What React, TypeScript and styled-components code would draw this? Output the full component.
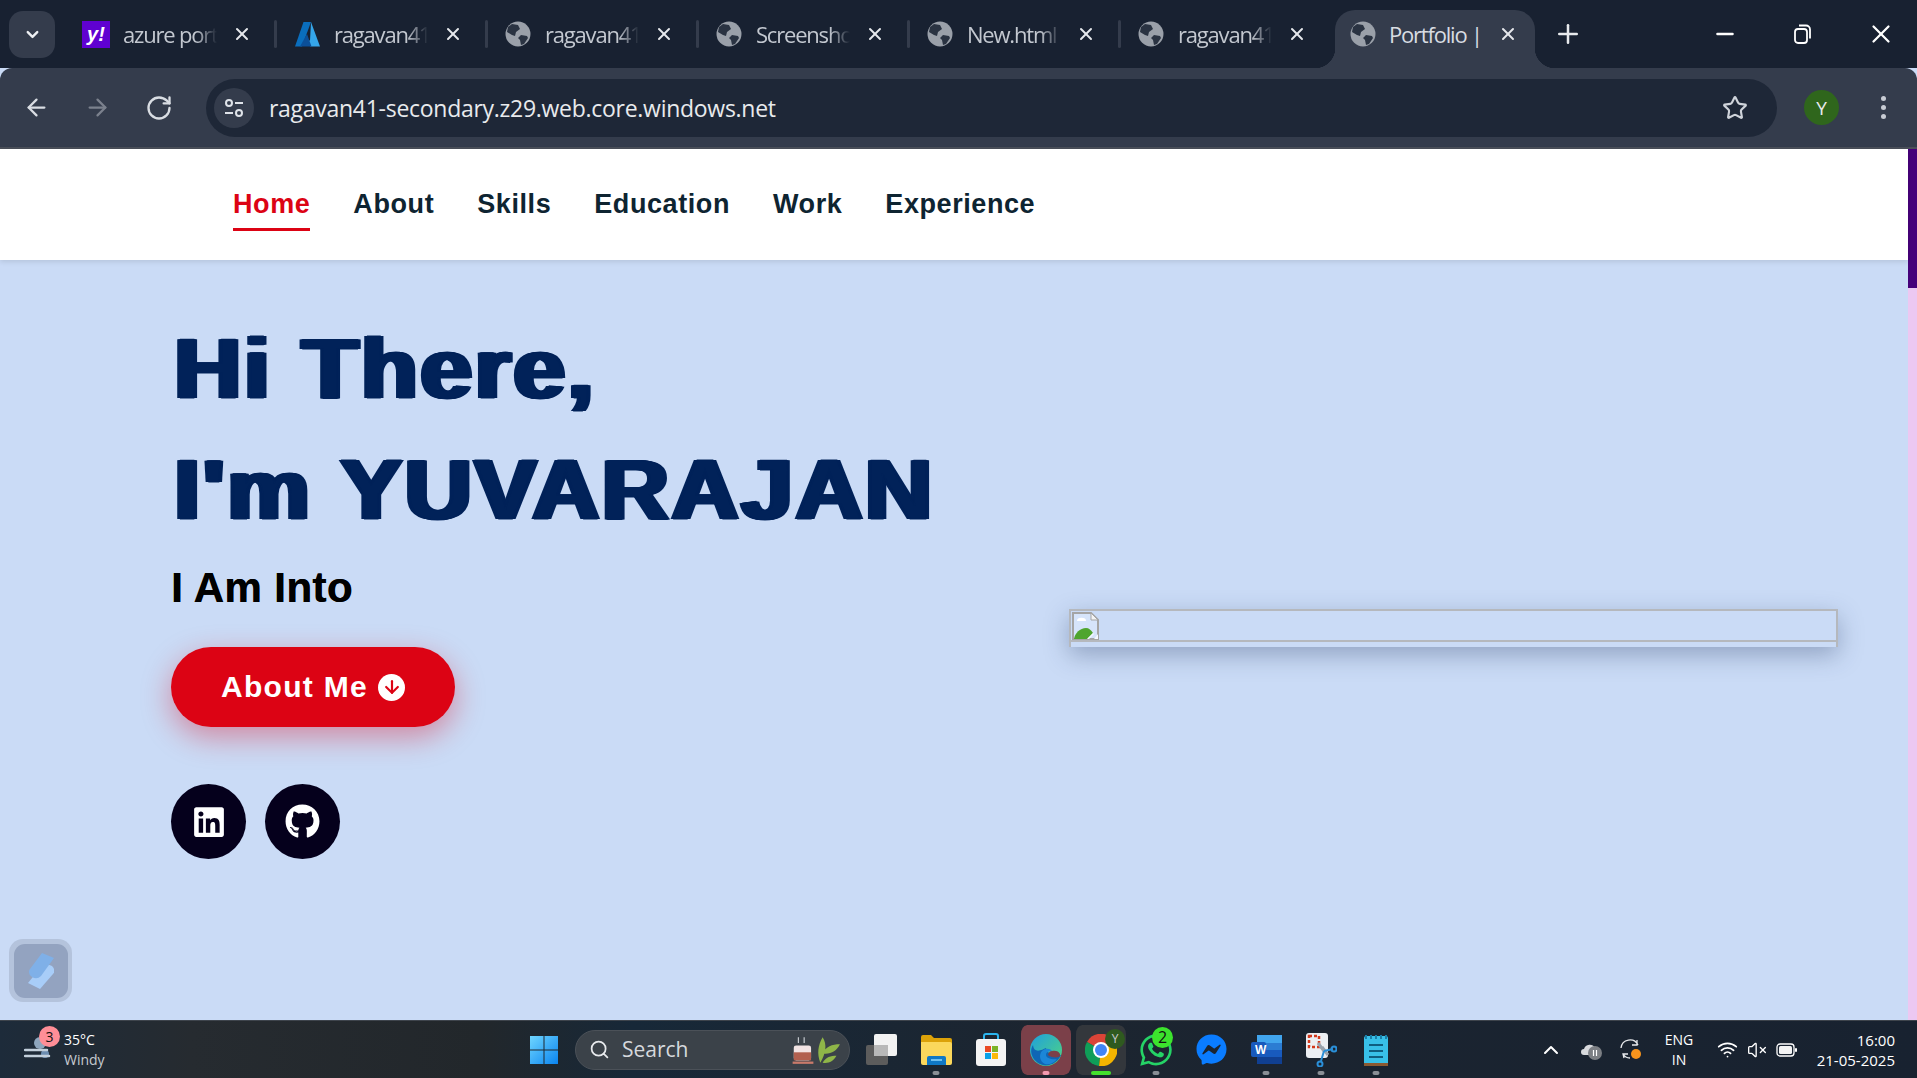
import React from "react";
import styled, { createGlobalStyle } from "styled-components";
import {
  ArrowLeft,
  ArrowRight,
  ArrowDown,
  ChevronDown,
  ChevronUp,
  Minus,
  Plus,
  RotateCw,
  Search,
  Star,
  VolumeX,
  Wifi,
  X,
} from "lucide-react";
import { FaFacebookMessenger, FaGithub, FaLinkedin, FaWhatsapp } from "react-icons/fa";

const TABS = [
  { icon: "yahoo", title: "azure portal" },
  { icon: "azure", title: "ragavan41-secondary" },
  { icon: "globe", title: "ragavan41-secondary" },
  { icon: "globe", title: "Screenshot" },
  { icon: "globe", title: "New.html" },
  { icon: "globe", title: "ragavan41-secondary" },
];

const NAV_ITEMS = ["Home", "About", "Skills", "Education", "Work", "Experience"];

const GlobeIcon = () => (
  <svg width="26" height="26" viewBox="0 0 26 26">
    <circle cx="13" cy="13" r="12.5" fill="#9aa0a9" />
    <path d="M7 3l6 1 2 4-4 3-1 4-3-1-5-3 1-5zM16 14l6 1 1 2-4 6-3 1-1-5-2-2z" fill="#2a3342" />
  </svg>
);

const AzureIcon = () => (
  <svg width="27" height="27" viewBox="0 0 27 27">
    <path d="M9.5 1H17L8 25.5H1z" fill="#0a6ebd" />
    <path d="M17 1l9 24.5h-9.5L11 19.5h5z" fill="#35a6ea" />
    <path d="M13 13l4.5 12.5H6z" fill="#0b4f99" />
  </svg>
);

const SiteInfoIcon = () => (
  <svg width="22" height="22" viewBox="0 0 22 22" fill="none" stroke="#dfe3e9" strokeWidth="2">
    <circle cx="6" cy="6" r="3" />
    <path d="M12 6h8M2 16h8" />
    <circle cx="16" cy="16" r="3" />
  </svg>
);

const RestoreIcon = () => (
  <svg width="18" height="20" viewBox="0 0 18 20" fill="none" stroke="#fff" strokeWidth="1.8">
    <rect x="1" y="5" width="12" height="14" rx="3" />
    <path d="M5 1.5h7a4 4 0 0 1 4 4v9" />
  </svg>
);

const BrokenImageIcon = () => (
  <svg width="27" height="28" viewBox="0 0 27 28">
    <path d="M1 1h18l7 7v19H1z" fill="#d6e4fa" stroke="#a5a5a5" strokeWidth="2" />
    <path d="M19 1v7h7z" fill="#f4f4f4" stroke="#a5a5a5" strokeWidth="1" />
    <path d="M5 9a3.500 2.500 0 0 1 9 0z" fill="#fff" />
    <path d="M2 27c1-6 6-11 12-11 3 0 5 2 7 5l-6 6z" fill="#4fa52e" />
    <path d="M15 27l6-6 1 1-5 5z" fill="#f4f8ff" />
    <path d="M22 27l4-5v5z" fill="#f4f8ff" />
  </svg>
);

const ShortcutIcon = () => (
  <svg width="26" height="36" viewBox="0 0 26 36">
    <path d="M24 13q4 4 1 8L12 36 0 30l13-16q5-4 11-1z" fill="#a8cdf8" />
    <path d="M14 0l12 5-13 18q-4 4-9 1-5-4-2-8z" fill="#7fb0e8" />
  </svg>
);

const WindIcon = () => (
  <svg width="32" height="32" viewBox="0 0 32 32" fill="none">
    <circle cx="16" cy="9" r="6" fill="#8ea6bd" />
    <circle cx="21" cy="20" r="4" fill="#6c8db0" />
    <path d="M1 16h22M1 22h24" stroke="#c3d0dc" strokeWidth="2.5" strokeLinecap="round" />
  </svg>
);

const WindowsIcon = () => (
  <svg width="30" height="30" viewBox="0 0 30 30">
    <defs>
      <linearGradient id="win" x1="0" y1="0" x2="1" y2="1">
        <stop offset="0" stopColor="#6fd6ff" />
        <stop offset="1" stopColor="#0a84f0" />
      </linearGradient>
    </defs>
    <path d="M1 1h13.5v13.5H1zM15.500 1H29v13.500H15.500zM1 15.500h13.500V29H1zM15.500 15.500H29V29H15.500z" fill="url(#win)" />
  </svg>
);

const TeaPlantIcon = () => (
  <svg width="52" height="30" viewBox="0 0 44 26">
    <rect x="1" y="9" width="15" height="13" rx="2" fill="#f2e4e4" />
    <rect x="1" y="15" width="15" height="7" fill="#b2604f" />
    <rect x="0" y="23" width="18" height="2" fill="#c97a6a" />
    <path d="M5 7V2M10 7V2" stroke="#c9cdd2" strokeWidth="1" />
    <path d="M24 24c-3-8-2-15 2-22 4 6 3 14-2 22zM26 16c3-6 8-8 15-8-3 6-8 9-15 8zM26 24c3-5 7-6 12-6-3 5-7 7-12 6z" fill="#8fb548" />
  </svg>
);

const TaskViewIcon = () => (
  <svg width="31" height="31" viewBox="0 0 31 31">
    <rect x="0" y="11" width="22" height="20" rx="2" fill="#5c5c5c" />
    <rect x="8" y="0" width="23" height="22" rx="2" fill="#f2f2f2" />
    <rect x="8" y="11" width="14" height="11" fill="#b8b8b8" />
  </svg>
);

const FolderIcon = () => (
  <svg width="31" height="31" viewBox="0 0 31 31">
    <path d="M0 3a2 2 0 0 1 2-2h8l3 3h16a2 2 0 0 1 2 2v4H0z" fill="#dca209" />
    <path d="M0 8h29a2 2 0 0 1 2 2v19a2 2 0 0 1-2 2H2a2 2 0 0 1-2-2z" fill="#fbd85c" />
    <path d="M6 31v-7a2 2 0 0 1 2-2h15a2 2 0 0 1 2 2v7z" fill="#0f78c5" />
    <rect x="10" y="25" width="11" height="2" fill="#6ec0f0" />
  </svg>
);

const StoreIcon = () => (
  <svg width="30" height="33" viewBox="0 0 30 33">
    <path d="M8 8V3a2 2 0 0 1 2-2h10a2 2 0 0 1 2 2v5" fill="none" stroke="#2cb5ee" strokeWidth="2" />
    <rect x="0" y="6" width="30" height="27" rx="3" fill="#f4f4f4" />
    <rect x="9" y="13" width="6" height="6" fill="#ea4a24" />
    <rect x="16" y="13" width="6" height="6" fill="#7cb327" />
    <rect x="9" y="20" width="6" height="6" fill="#0aa1e8" />
    <rect x="16" y="20" width="6" height="6" fill="#fbb90a" />
  </svg>
);

const EdgeIcon = () => (
  <svg width="32" height="32" viewBox="0 0 32 32">
    <defs>
      <linearGradient id="edge" x1="0" y1="0" x2="1" y2="1">
        <stop offset="0" stopColor="#1e9fe0" />
        <stop offset="1" stopColor="#52d67c" />
      </linearGradient>
    </defs>
    <circle cx="16" cy="16" r="16" fill="url(#edge)" />
    <path d="M31 21c-3 8-14 14-23 8C2 25-1 17 3 11c1 9 9 5 13 3 1 5 5 7 15 7z" fill="#0f66b5" />
    <path d="M15 30c-6-3-6-10-3-13 3-3 8-3 10 0-3 0-6 1-6 4 0 3 6 5 11 4-3 4-7 6-12 5z" fill="#1b86d8" />
    <path d="M22 17c3-1 7 0 8 3 0 1 0 2-1 3-4 1-9 0-11-2 0-2 2-4 4-4z" fill="#7b4049" />
  </svg>
);

const ChromeIcon = () => (
  <svg width="32" height="32" viewBox="0 0 32 32">
    <path d="M16 16L2 8A16 16 0 0 1 30 8z" fill="#db4437" />
    <path d="M16 16L2 8a16 16 0 0 0 12 24z" fill="#0f9d58" />
    <path d="M16 16L14 32A16 16 0 0 0 30 8z" fill="#f4b400" />
    <circle cx="16" cy="16" r="8" fill="#fff" />
    <circle cx="16" cy="16" r="6" fill="#4285f4" />
  </svg>
);

const WordIcon = () => (
  <svg width="31" height="31" viewBox="0 0 31 31">
    <rect x="6" y="1" width="25" height="29" rx="2" fill="#2b7cd3" />
    <rect x="6" y="1" width="25" height="8" fill="#41a5ee" />
    <rect x="6" y="16" width="25" height="7" fill="#185abd" />
    <rect x="6" y="23" width="25" height="7" fill="#103f91" />
    <rect x="0" y="8" width="15" height="15" rx="2" fill="#185abd" />
  </svg>
);

const SnipIcon = () => (
  <svg width="31" height="34" viewBox="0 0 31 34">
    <rect x="0" y="0" width="22" height="25" rx="3" fill="#eceff3" />
    <rect x="3" y="3" width="10" height="11" fill="none" stroke="#d2381c" strokeWidth="2.500" strokeDasharray="3 2" />
    <path d="M12 10l6 8M22 22l-6-8" stroke="#9aa3ad" strokeWidth="3" />
    <path d="M18 18l9-2M18 18l-3 10" stroke="#2a8fd8" strokeWidth="2" />
    <circle cx="28" cy="16" r="2.500" fill="none" stroke="#2a8fd8" strokeWidth="2" />
    <circle cx="14" cy="31" r="2.500" fill="none" stroke="#2a8fd8" strokeWidth="2" />
  </svg>
);

const NotepadIcon = () => (
  <svg width="24" height="32" viewBox="0 0 24 32">
    <rect x="0" y="2" width="24" height="30" rx="2" fill="#38c0e8" />
    <rect x="0" y="29" width="24" height="3" fill="#8c5a32" />
    <path d="M2 1v4M7 1v4M12 1v4M17 1v4M22 1v4" stroke="#1a7fa8" strokeWidth="2" />
    <path d="M5 11h14M5 17h14M5 23h14" stroke="#0f5e80" strokeWidth="2" />
  </svg>
);

const CloudIcon = () => (
  <svg width="21" height="20" viewBox="0 0 21 20">
    <path d="M3 15a3 3 0 0 1 0-6 6 6 0 0 1 11-1 3 3 0 0 1 4 3v4z" fill="#d8dadd" />
    <circle cx="14" cy="13" r="7" fill="#7c7f84" />
    <path d="M12.500 10v6M15.500 10v6" stroke="#fff" strokeWidth="1.200" />
  </svg>
);

const SyncIcon = () => (
  <svg width="22" height="22" viewBox="0 0 22 22" fill="none">
    <path d="M1 9a9 9 0 0 1 17-3M17 1v5h-5M4 19l-1-4h5M3 15a8 8 0 0 0 7 4" stroke="#e8eaed" strokeWidth="1.300" />
    <circle cx="16" cy="15" r="5" fill="#f7941d" />
  </svg>
);

const BatteryIcon = () => (
  <svg width="21" height="14" viewBox="0 0 21 14">
    <rect x="1" y="1" width="17" height="12" rx="3" fill="none" stroke="#fff" strokeWidth="1.300" />
    <rect x="3" y="3" width="13" height="8" rx="1.500" fill="#f4f4f4" />
    <rect x="19" y="5" width="2" height="4" rx="1" fill="#fff" />
  </svg>
);

const tabIcon = (name: string) => {
  if (name === "yahoo") return <YahooIcon>y!</YahooIcon>;
  if (name === "azure") return <AzureIcon />;
  return <GlobeIcon />;
};

const App = () => {
  return (
    <Wrapper>
      <GlobalStyle />
      <TabStrip>
        <TabSearch>
          <ChevronDown size={19} strokeWidth={3} />
        </TabSearch>
        {TABS.map((tab, i) => (
          <Tab key={i} $separator={i < TABS.length - 1}>
            <TabIconSlot>{tabIcon(tab.icon)}</TabIconSlot>
            <TabTitle>{tab.title}</TabTitle>
            <TabClose>
              <X size={20} strokeWidth={2.4} />
            </TabClose>
          </Tab>
        ))}
        <ActiveTab>
          <GlobeIcon />
          <ActiveTitle>Portfolio | Yuvarajan</ActiveTitle>
          <X size={20} strokeWidth={2.4} color="#e6e8ec" />
        </ActiveTab>
        <NewTab>
          <Plus size={30} strokeWidth={2} />
        </NewTab>
        <WindowControls>
          <WindowButton>
            <Minus size={26} strokeWidth={2.2} />
          </WindowButton>
          <WindowButton>
            <RestoreIcon />
          </WindowButton>
          <WindowButton>
            <X size={30} strokeWidth={1.8} />
          </WindowButton>
        </WindowControls>
      </TabStrip>

      <Toolbar>
        <ToolButton>
          <ArrowLeft size={27} strokeWidth={2} />
        </ToolButton>
        <ToolButton $disabled>
          <ArrowRight size={27} strokeWidth={2} />
        </ToolButton>
        <ToolButton>
          <RotateCw size={28} strokeWidth={2} />
        </ToolButton>
        <Omnibox>
          <SiteInfo>
            <SiteInfoIcon />
          </SiteInfo>
          <Url>ragavan41-secondary.z29.web.core.windows.net</Url>
          <Star size={26} strokeWidth={2} color="#cfd3da" />
        </Omnibox>
        <Avatar>Y</Avatar>
        <MenuDots>
          <i />
          <i />
          <i />
        </MenuDots>
      </Toolbar>

      <PageArea>
        <Page>
          <Navbar>
            {NAV_ITEMS.map((item, i) => (
              <NavLink key={item} $active={i === 0}>
                {item}
              </NavLink>
            ))}
          </Navbar>
          <Hero>
            <HeroText>
              <Heading>Hi There,</Heading>
              <Heading>I'm YUVARAJAN</Heading>
              <SubHeading>I Am Into</SubHeading>
              <AboutButton>
                About Me
                <AboutArrow>
                  <ArrowDown size={20} strokeWidth={2.6} />
                </AboutArrow>
              </AboutButton>
              <Socials>
                <SocialLink>
                  <FaLinkedin size={34} />
                </SocialLink>
                <SocialLink>
                  <FaGithub size={35} />
                </SocialLink>
              </Socials>
            </HeroText>
            <HeroImage>
              <ImageFrame>
                <BrokenImageIcon />
              </ImageFrame>
            </HeroImage>
          </Hero>
          <FloatingShortcut>
            <ShortcutInner>
              <ShortcutIcon />
            </ShortcutInner>
          </FloatingShortcut>
        </Page>
        <Scrollbar>
          <ScrollThumb />
        </Scrollbar>
      </PageArea>

      <Taskbar>
        <Weather>
          <WeatherIcon>
            <WindIcon />
            <WeatherBadge>3</WeatherBadge>
          </WeatherIcon>
          <WeatherText>
            <span>35°C</span>
            <WeatherSub>Windy</WeatherSub>
          </WeatherText>
        </Weather>
        <TaskCenter>
          <TaskSlot>
            <WindowsIcon />
          </TaskSlot>
          <SearchPill>
            <Search size={21} strokeWidth={2} />
            <SearchLabel>Search</SearchLabel>
            <TeaPlantIcon />
          </SearchPill>
          <TaskSlot $ml={3}>
            <TaskViewIcon />
          </TaskSlot>
          <TaskSlot $dot="#8a8f96">
            <FolderIcon />
          </TaskSlot>
          <TaskSlot>
            <StoreIcon />
          </TaskSlot>
          <TaskSlot $bg="#7b4049" $dot="#f49ab0">
            <EdgeIcon />
          </TaskSlot>
          <TaskSlot $bg="#33373c" $dot="#45e02e" $wideDot>
            <ChromeIcon />
            <ChromeProfile>Y</ChromeProfile>
          </TaskSlot>
          <TaskSlot $dot="#8a8f96">
            <FaWhatsapp size={36} color="#25d366" />
            <WhatsappBadge>2</WhatsappBadge>
          </TaskSlot>
          <TaskSlot>
            <FaFacebookMessenger size={31} color="#0a7cff" />
          </TaskSlot>
          <TaskSlot $dot="#8a8f96">
            <WordIcon />
            <WordLetter>W</WordLetter>
          </TaskSlot>
          <TaskSlot $dot="#8a8f96">
            <SnipIcon />
          </TaskSlot>
          <TaskSlot $dot="#8a8f96">
            <NotepadIcon />
          </TaskSlot>
        </TaskCenter>
        <Tray>
          <TrayIcons>
            <ChevronUp size={24} strokeWidth={2} />
            <CloudIcon />
            <SyncIcon />
          </TrayIcons>
          <LangBlock>
            <span>ENG</span>
            <span>IN</span>
          </LangBlock>
          <TrayGroup>
            <Wifi size={21} strokeWidth={2} />
            <VolumeX size={20} strokeWidth={1.6} />
            <BatteryIcon />
          </TrayGroup>
          <Clock>
            <span>16:00</span>
            <span>21-05-2025</span>
          </Clock>
        </Tray>
      </Taskbar>
    </Wrapper>
  );
};

const GlobalStyle = createGlobalStyle`
  html, body {
    margin: 0;
    padding: 0;
    overflow: hidden;
    background: #cadbf6;
  }
  * {
    box-sizing: border-box;
  }
`;

const Wrapper = styled.div`
  width: 1917px;
  height: 1078px;
  display: flex;
  flex-direction: column;
  font-family: "Open Sans", "Noto Sans", sans-serif;
  overflow: hidden;
`;

const TabStrip = styled.div`
  height: 68px;
  flex-shrink: 0;
  background: #182131;
  display: flex;
  align-items: flex-end;
  padding-left: 9px;
  color: #fff;
`;
const TabSearch = styled.div`
  width: 46px;
  height: 47px;
  margin: 0 11px 10px 0;
  border-radius: 14px;
  background: #343c4c;
  display: flex;
  align-items: center;
  justify-content: center;
  color: #eef0f3;
`;
const Tab = styled.div<{ $separator?: boolean }>`
  width: 211px;
  height: 58px;
  flex-shrink: 0;
  position: relative;
  display: flex;
  align-items: center;
  padding: 0 0 10px 16px;
  &::after {
    content: ${(p) => (p.$separator ? '""' : "none")};
    position: absolute;
    right: 0;
    top: 10px;
    height: 28px;
    width: 3px;
    border-radius: 2px;
    background: #343c4c;
  }
`;
const TabIconSlot = styled.div`
  width: 28px;
  height: 28px;
  flex-shrink: 0;
  display: flex;
  align-items: center;
  justify-content: center;
`;
const YahooIcon = styled.div`
  width: 28px;
  height: 27px;
  background: #5f01d1;
  color: #fff;
  font: italic bold 20px "Liberation Sans", sans-serif;
  display: flex;
  align-items: center;
  justify-content: center;
`;
const TabTitle = styled.div`
  width: 94px;
  margin-left: 13px;
  font-size: 22px;
  letter-spacing: -1.2px;
  color: #c3c8d0;
  white-space: nowrap;
  overflow: hidden;
  mask-image: linear-gradient(to right, #000 78%, transparent 100%);
`;
const TabClose = styled.div`
  width: 20px;
  height: 20px;
  margin-left: 15px;
  color: #e6e8ec;
  display: flex;
`;
const ActiveTab = styled.div`
  width: 200px;
  height: 58px;
  margin-left: 3px;
  flex-shrink: 0;
  background: #343c4c;
  border-radius: 20px 20px 0 0;
  position: relative;
  display: flex;
  align-items: center;
  padding: 0 11px 10px 15px;
  &::before,
  &::after {
    content: "";
    position: absolute;
    bottom: 0;
    width: 20px;
    height: 20px;
  }
  &::before {
    left: -20px;
    background: radial-gradient(circle at 0 0, transparent 20px, #343c4c 20.5px);
  }
  &::after {
    right: -20px;
    background: radial-gradient(circle at 100% 0, transparent 20px, #343c4c 20.5px);
  }
`;
const ActiveTitle = styled.div`
  width: 92px;
  margin: 0 17px 0 13px;
  font-size: 22px;
  letter-spacing: -1.2px;
  color: #d8dce2;
  white-space: nowrap;
  overflow: hidden;
`;
const NewTab = styled.div`
  margin: 0 0 12px 18px;
  display: flex;
  color: #e8eaed;
  height: 44px;
  align-items: center;
`;
const WindowControls = styled.div`
  margin-left: auto;
  margin-right: -3px;
  height: 68px;
  display: flex;
  align-items: center;
`;
const WindowButton = styled.div`
  width: 78px;
  display: flex;
  justify-content: center;
  color: #fff;
`;

const Toolbar = styled.div`
  height: 81px;
  flex-shrink: 0;
  background: #343c4c;
  border-bottom: 2px solid #4a4f59;
  border-radius: 12px 12px 0 0;
  display: flex;
  align-items: center;
  padding: 0 0 0 14px;
  color: #d9dde3;
`;
const ToolButton = styled.div<{ $disabled?: boolean }>`
  width: 61px;
  display: flex;
  justify-content: flex-start;
  padding-left: 9px;
  color: ${(p) => (p.$disabled ? "#7b818d" : "#d9dde3")};
`;
const Omnibox = styled.div`
  width: 1571px;
  height: 58px;
  margin-left: 9px;
  border-radius: 29px;
  background: #1e2737;
  display: flex;
  align-items: center;
  padding: 0 29px 0 8px;
`;
const SiteInfo = styled.div`
  width: 40px;
  height: 40px;
  border-radius: 50%;
  background: #343c4c;
  display: flex;
  align-items: center;
  justify-content: center;
`;
const Url = styled.div`
  flex: 1;
  margin-left: 15px;
  font-size: 23px;
  letter-spacing: -0.28px;
  color: #e8eaed;
`;
const Avatar = styled.div`
  width: 35px;
  height: 35px;
  margin-left: 27px;
  border-radius: 50%;
  background: #2f661c;
  color: #e8eaed;
  font-size: 19px;
  display: flex;
  align-items: center;
  justify-content: center;
`;
const MenuDots = styled.div`
  margin-left: 42px;
  display: flex;
  flex-direction: column;
  gap: 4px;
  i {
    width: 5px;
    height: 5px;
    border-radius: 50%;
    background: #c8ccd4;
  }
`;

const PageArea = styled.div`
  flex: 1;
  min-height: 0;
  display: flex;
`;
const Page = styled.div`
  flex: 1;
  position: relative;
  display: flex;
  flex-direction: column;
  background: #cadbf6;
`;
const Navbar = styled.nav`
  height: 111px;
  flex-shrink: 0;
  background: #fff;
  box-shadow: 0 2px 5px rgba(0, 0, 0, 0.1);
  display: flex;
  align-items: center;
  gap: 43px;
  padding-left: 233px;
  position: relative;
  z-index: 1;
`;
const NavLink = styled.a<{ $active?: boolean }>`
  font: bold 27px "Liberation Sans", Arial, sans-serif;
  letter-spacing: 0.58px;
  color: ${(p) => (p.$active ? "#dc0314" : "#0e2431")};
  padding: 11px 0 8px;
  border-bottom: 3px solid ${(p) => (p.$active ? "#dc0314" : "transparent")};
`;
const Hero = styled.section`
  flex: 1;
  display: grid;
  grid-template-columns: 1fr 769px;
  padding: 0 70px 0 171px;
`;
const HeroText = styled.div`
  display: flex;
  flex-direction: column;
  align-items: flex-start;
  padding-top: 48px;
`;
const Heading = styled.h1`
  margin: 0;
  padding-left: 3px;
  font: bold 86px/121px "Liberation Sans", Arial, sans-serif;
  color: #012259;
  -webkit-text-stroke: 1px #012259;
  text-shadow: 1px 0 #012259, -1px 0 #012259, 2px 0 #012259, -2px 0 #012259, 3px 0 #012259, -3px 0 #012259;
  letter-spacing: 2.4px;
  word-spacing: 1px;
  white-space: nowrap;
  transform: scaleX(1.08);
  transform-origin: left center;
`;
const SubHeading = styled.div`
  margin-top: 13px;
  font: bold 42px/50px "Liberation Sans", Arial, sans-serif;
  letter-spacing: 0.4px;
  color: #000;
  text-shadow: 0.5px 0 #000;
`;
const AboutButton = styled.a`
  width: 284px;
  height: 80px;
  margin-top: 34px;
  border-radius: 40px;
  background: #dc0314;
  box-shadow: 0 10px 30px rgba(220, 3, 20, 0.38);
  color: #fff;
  font: bold 30px "Liberation Sans", Arial, sans-serif;
  letter-spacing: 1.3px;
  display: flex;
  align-items: center;
  justify-content: center;
  gap: 10px;
`;
const AboutArrow = styled.span`
  width: 27px;
  height: 27px;
  border-radius: 50%;
  background: #fff;
  color: #dc0314;
  display: flex;
  align-items: center;
  justify-content: center;
`;
const Socials = styled.div`
  margin-top: 57px;
  display: flex;
  gap: 19px;
`;
const SocialLink = styled.a`
  width: 75px;
  height: 75px;
  border-radius: 50%;
  background: #05001c;
  color: #fff;
  display: flex;
  align-items: center;
  justify-content: center;
`;
const HeroImage = styled.div`
  display: flex;
  align-items: center;
  padding-bottom: 24px;
`;
const ImageFrame = styled.div`
  width: 100%;
  height: 38px;
  border: 2px solid #b5b8bd;
  border-bottom: 0;
  box-shadow: 0 8px 25px rgba(40, 60, 100, 0.35);
  display: flex;
  padding: 1px 0 0 1px;
  position: relative;
  &::after {
    content: "";
    position: absolute;
    left: -2px;
    right: -2px;
    bottom: 5px;
    height: 2px;
    background: #b5b8bd;
  }
`;
const FloatingShortcut = styled.div`
  position: absolute;
  left: 9px;
  bottom: 18px;
  width: 63px;
  height: 63px;
  border-radius: 14px;
  background: #b4c3dc;
  display: flex;
  align-items: center;
  justify-content: center;
`;
const ShortcutInner = styled.div`
  width: 54px;
  height: 54px;
  border-radius: 11px;
  background: #93a3c0;
  display: flex;
  align-items: center;
  justify-content: center;
`;
const Scrollbar = styled.div`
  width: 9px;
  flex-shrink: 0;
  background: #ecc8f2;
`;
const ScrollThumb = styled.div`
  height: 139px;
  background: #45007a;
`;

const Taskbar = styled.footer`
  height: 58px;
  flex-shrink: 0;
  background: linear-gradient(90deg, #1d2b3a 0%, #262b30 10%, #22272b 25%, #172838 33%, #1c2530 55%, #182230 100%);
  border-top: 1px solid #3e444c;
  display: flex;
  align-items: center;
  color: #fff;
`;
const Weather = styled.div`
  width: 516px;
  padding-left: 24px;
  display: flex;
  align-items: center;
  gap: 5px;
`;
const WeatherIcon = styled.div`
  position: relative;
  display: flex;
  width: 32px;
`;
const WeatherBadge = styled.span`
  position: absolute;
  top: -8px;
  right: -4px;
  width: 21px;
  height: 21px;
  border-radius: 50%;
  background: #ff8e97;
  color: #111;
  font-size: 14px;
  display: flex;
  align-items: center;
  justify-content: center;
`;
const WeatherText = styled.div`
  display: flex;
  flex-direction: column;
  font-size: 14px;
  line-height: 20px;
  margin-left: 3px;
`;
const WeatherSub = styled.span`
  color: #c6cad0;
`;
const TaskCenter = styled.div`
  display: flex;
  align-items: center;
`;
const TaskSlot = styled.div<{ $ml?: number; $bg?: string; $dot?: string; $wideDot?: boolean }>`
  width: 55px;
  height: 50px;
  margin-left: ${(p) => p.$ml || 0}px;
  position: relative;
  flex-shrink: 0;
  border-left: 3px solid transparent;
  border-right: 2px solid transparent;
  border-radius: 9px;
  background: ${(p) => p.$bg || "transparent"};
  background-clip: padding-box;
  display: flex;
  align-items: center;
  justify-content: center;
  &::after {
    content: ${(p) => (p.$dot ? '""' : "none")};
    position: absolute;
    bottom: 0;
    left: 50%;
    transform: translateX(-50%);
    width: ${(p) => (p.$wideDot ? 20 : 7)}px;
    height: 4px;
    border-radius: 2px;
    background: ${(p) => p.$dot};
  }
`;
const SearchPill = styled.div`
  width: 275px;
  height: 40px;
  margin-left: 4px;
  border-radius: 20px;
  background: #3b4249;
  border: 1px solid #4b5158;
  display: flex;
  align-items: center;
  padding: 0 5px 0 13px;
  color: #e8eaed;
`;
const SearchLabel = styled.span`
  flex: 1;
  margin: 0 0 2px 12px;
  font-size: 21px;
  color: #d6d9dd;
`;
const ChromeProfile = styled.span`
  position: absolute;
  top: 4px;
  right: 1px;
  width: 20px;
  height: 20px;
  border-radius: 50%;
  background: #2f5a1f;
  color: #c9cdd2;
  font-size: 12px;
  display: flex;
  align-items: center;
  justify-content: center;
`;
const WhatsappBadge = styled.span`
  position: absolute;
  top: 2px;
  right: 8px;
  width: 21px;
  height: 21px;
  border-radius: 50%;
  background: #3ce32d;
  color: #111;
  font-size: 16px;
  display: flex;
  align-items: center;
  justify-content: center;
`;
const WordLetter = styled.span`
  position: absolute;
  left: 14px;
  top: 18px;
  font: bold 12px "Liberation Sans", sans-serif;
  color: #fff;
`;
const Tray = styled.div`
  margin-left: auto;
  padding-right: 22px;
  display: flex;
  align-items: center;
`;
const TrayIcons = styled.div`
  display: flex;
  align-items: center;
  gap: 18px;
`;
const LangBlock = styled.div`
  width: 34px;
  margin-left: 20px;
  display: flex;
  flex-direction: column;
  align-items: center;
  font-size: 14px;
  line-height: 20px;
`;
const TrayGroup = styled.div`
  margin-left: 21px;
  display: flex;
  align-items: center;
  gap: 9px;
`;
const Clock = styled.div`
  width: 98px;
  display: flex;
  flex-direction: column;
  align-items: flex-end;
  font-size: 15px;
  line-height: 20px;
`;

export default App;
